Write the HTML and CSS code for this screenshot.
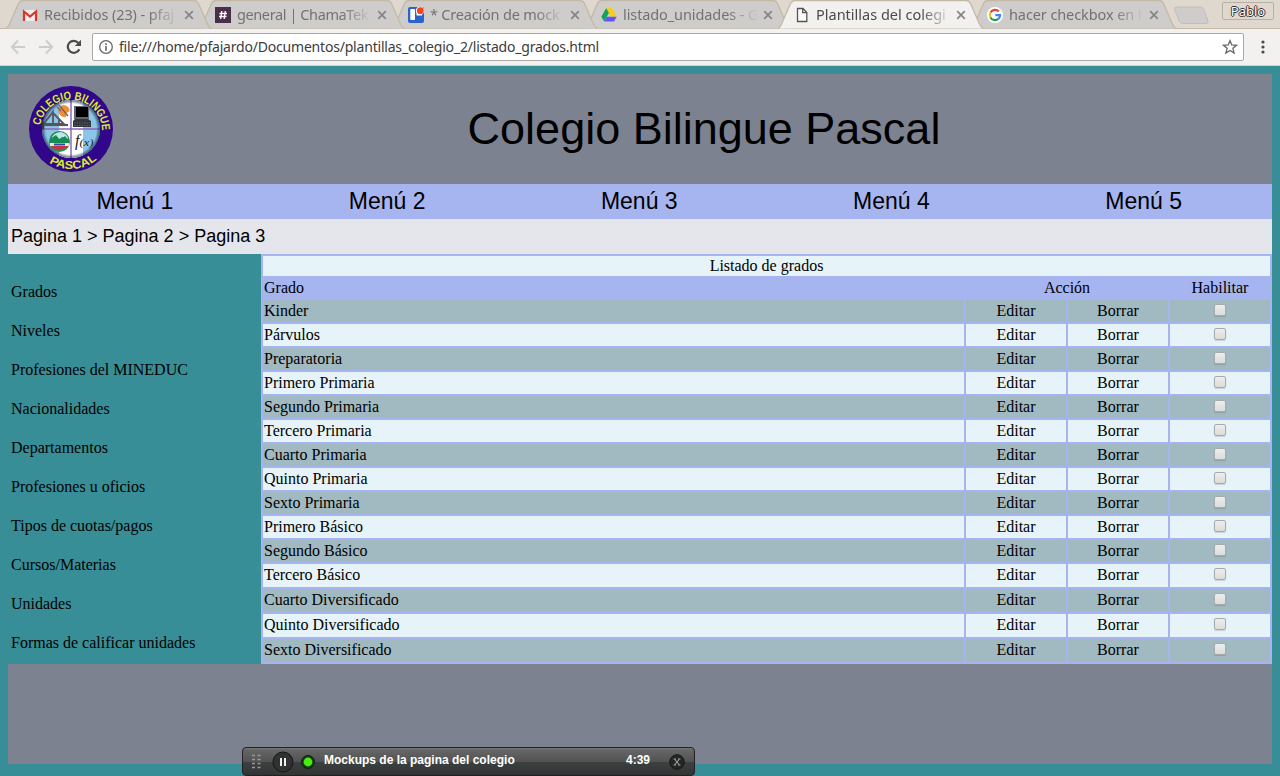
FILE: index.html
```
<!DOCTYPE html>
<html lang="es">
<head>
<meta charset="utf-8">
<title>Plantillas del colegio</title>
<link rel="stylesheet" href="styles.css">
</head>
<body>
<svg class="defs" width="0" height="0">
  <defs>
    <symbol id="tab-shape" viewBox="0 0 206 29"><path d="M0 28.5C2 28 2.500 26.500 4 23L12.500 3.500Q14 .5 17 .5H188Q191 .5 192.500 3.500L201 23C202.500 26.500 203 28 205.500 28.500" stroke="#c5b8a5" stroke-width="1.300"/></symbol>
    <symbol id="close" viewBox="0 0 10 10"><path d="M1.200 1.200L8.800 8.800M8.800 1.200L1.200 8.800" stroke="currentColor" stroke-width="1.700"/></symbol>
  </defs>
</svg>

<header class="browser">
  <div class="tabs">
    <div class="tab"><svg class="shape"><use href="#tab-shape"/></svg>
      <svg class="fav" viewBox="0 0 16 16"><path d="M1 3H15V14H1Z" fill="#eee"/><path d="M2 14V4.500L8 9.500L14 4.500V14" fill="none" stroke="#dc3527" stroke-width="2.200"/></svg>
      <span class="label l1">Recibidos (23) - pfaj</span><svg class="x"><use href="#close"/></svg></div>
    <div class="tab"><svg class="shape"><use href="#tab-shape"/></svg>
      <svg class="fav" viewBox="0 0 16 16"><path d="M0 0H16V16H0Z" fill="#4b2f4a"/><path d="M6.800 4L5.700 12M10.300 4L9.200 12M4.500 6.500H12M4 9.500H11.500" stroke="#fff" stroke-width="1.300"/></svg>
      <span class="label l2">general | ChamaTek</span><svg class="x"><use href="#close"/></svg></div>
    <div class="tab"><svg class="shape"><use href="#tab-shape"/></svg>
      <svg class="fav" viewBox="0 0 16 16"><rect width="16" height="16" rx="2" fill="#2d62c8"/><rect x="2.300" y="2" width="4.700" height="11" rx=".7" fill="#fff"/><path d="M8.500 2H14V8.500H8.500Z" fill="#fff"/><circle cx="12" cy="3.800" r="4.200" fill="#fff"/><circle cx="12.300" cy="3.700" r="3.400" fill="#f04624"/></svg>
      <span class="label l3">* Creación de mock</span><svg class="x"><use href="#close"/></svg></div>
    <div class="tab"><svg class="shape"><use href="#tab-shape"/></svg>
      <svg class="fav" viewBox="0 0 16 16"><path d="M5.300 1L8 5.800L3.200 14.500L.3 9.800Z" fill="#12a45c"/><path d="M5.300 1H10.700L15.700 9.800H10.200Z" fill="#fccf08"/><path d="M5.800 9.800H15.700L13 14.500H3.200Z" fill="#6155f5"/></svg>
      <span class="label l4">listado_unidades - G</span><svg class="x"><use href="#close"/></svg></div>
    <div class="tab active"><svg class="shape"><use href="#tab-shape"/></svg>
      <svg class="fav" viewBox="0 0 16 16"><path d="M3.500 1.500H9L12.800 5.500V14.500H3.500ZM8.700 1.500V5.700H12.800" fill="#fafafa" stroke="#555" stroke-width="1.300"/></svg>
      <span class="label l5">Plantillas del colegi</span><svg class="x"><use href="#close"/></svg></div>
    <div class="tab"><svg class="shape"><use href="#tab-shape"/></svg>
      <svg class="fav" viewBox="0 0 16 16"><circle cx="8" cy="8" r="8" fill="#fff"/><g fill="none" stroke-width="2.200"><path d="M11.800 4.500A5.100 5.100 0 0 0 3.500 5.600" stroke="#ea4335"/><path d="M3.500 5.600A5.100 5.100 0 0 0 3.500 10.400" stroke="#fbbc05"/><path d="M3.500 10.400A5.100 5.100 0 0 0 11.500 11.700" stroke="#20a34a"/><path d="M11.500 11.700A5.100 5.100 0 0 0 13 8.200H8.300" stroke="#4285f4"/></g></svg>
      <span class="label l6">hacer checkbox en l</span><svg class="x"><use href="#close"/></svg></div>
    <svg class="newtab" viewBox="0 0 36 19"><path d="M3.500 1H27Q29.500 1 30.500 3L35 15Q35.500 17.500 33 17.500H9.500Q7.500 17.500 6.500 15.500L1.500 3.500Q1 1 3.500 1Z" fill="#cfcdcc" stroke="#c8bcab"/></svg>
    <div class="user">Pablo</div>
  </div>
  <div class="toolbar">
    <svg class="arrow" viewBox="0 0 16 16"><path d="M15 8H2M8 1.500L1.800 8L8 14.500"/></svg>
    <svg class="arrow" viewBox="0 0 16 16"><path d="M1 8H14M8 1.500L14.200 8L8 14.500"/></svg>
    <svg class="reload" viewBox="0 0 16 16"><path d="M13.300 10.200A6 6 0 1 1 12.400 4" fill="none" stroke="#4a4a4a" stroke-width="2.200"/><path d="M15 .8V7H8.800Z" fill="#4a4a4a"/></svg>
    <div class="address">
      <svg class="info" viewBox="0 0 16 16"><circle cx="8" cy="8" r="6.300" fill="none" stroke="#666" stroke-width="1.300"/><path d="M8 7V11.700M8 4.300V5.900" stroke="#666" stroke-width="1.600"/></svg>
      <span class="url">file:///home/pfajardo/Documentos/plantillas_colegio_2/listado_grados.html</span>
      <svg class="star" viewBox="0 0 16 16"><path d="M8 1.700L9.800 6L14.500 6.300L10.900 9.300L12.100 14L8 11.400L3.900 14L5.100 9.300L1.500 6.300L6.200 6Z" fill="none" stroke="#666" stroke-width="1.300"/></svg>
    </div>
    <svg class="kebab" viewBox="0 0 4 14"><g fill="#4a4a4a"><circle cx="2" cy="2" r="1.600"/><circle cx="2" cy="7" r="1.600"/><circle cx="2" cy="12" r="1.600"/></g></svg>
  </div>
</header>

<main class="page">
  <div class="banner">
    <svg class="logo" viewBox="0 0 86 88">
      <defs>
        <path id="arc-top" d="M12.200 40.500A31.200 31.500 0 0 1 74 43.500"/>
        <path id="arc-bottom" d="M19.500 76.500A40 40 0 0 0 70 73.500"/>
        <clipPath id="disc"><circle cx="43" cy="44" r="29"/></clipPath>
        <radialGradient id="rim"><stop offset=".87" stop-color="#234" stop-opacity="0"/><stop offset="1" stop-color="#123" stop-opacity=".7"/></radialGradient>
      </defs>
      <ellipse cx="43" cy="44" rx="42" ry="43" fill="#32068a"/>
      <g clip-path="url(#disc)">
        <path d="M14 15H72V73H14Z" fill="#8bc6e8"/><path d="M31 15H55V73H31Z" fill="#fff"/>
        <path d="M43 15V73M14 44H72" stroke="#8b68b9" stroke-width="1.500"/>
        <circle cx="43" cy="44" r="29" fill="url(#rim)"/>
      </g>
      <path d="M30 23Q36 17 41 23Q43 27 38 28Q40 33 35 32Q30 30 30 23Z" fill="#ec9030"/>
      <path d="M31 20L40 31M29 22L33 26" stroke="#765b64" stroke-width="1.200"/>
      <g fill="none" stroke="#57545c" stroke-width="1.800"><path d="M15 40L25 27V40ZM25 28L36 39H16M31 34V39"/><path d="M15 40H40" stroke-width="2.200"/></g><path d="M15 36V44" stroke="#333844" stroke-width="2"/>
      <path d="M46 21H61V34H46Z" fill="#60666b"/><path d="M48 22H60V32H48Z" fill="#000"/><path d="M47 34H60L63 36V42H45V36Z" fill="#32373c"/><path d="M46 38H62M46 40.500H62" stroke="#777" stroke-width=".6" stroke-dasharray="1.500 1"/>
      <circle cx="31.500" cy="56.500" r="10.500" fill="#35884e"/><path d="M23 54Q26 47 33 47Q40 49 40 54L34 52L30 55Z" fill="#b8e9ef"/><path d="M22 54L28 50L32 55L37 51L41 56V59H22Z" fill="#168c54"/><path d="M22 59.500H41" stroke="#f2e7cb" stroke-width="3"/><path d="M23 61Q31 69 40 61Z" fill="#c83245"/><path d="M26 59.500H37" stroke="#304c9c" stroke-width="2"/>
      <text class="fx" x="47" y="61">f<tspan class="fx-arg" textLength="14" lengthAdjust="spacingAndGlyphs">(x)</tspan></text>
      <text class="ring"><textPath href="#arc-top" textLength="92" lengthAdjust="spacingAndGlyphs">COLEGIO BILINGUE</textPath></text>
      <text class="ring bottom"><textPath href="#arc-bottom" startOffset="2" textLength="51" lengthAdjust="spacingAndGlyphs">PASCAL</textPath></text>
    </svg>
    <h1>Colegio Bilingue Pascal</h1>
  </div>
  <nav class="menu"><span>Menú 1</span><span>Menú 2</span><span>Menú 3</span><span>Menú 4</span><span>Menú 5</span></nav>
  <div class="crumbs">Pagina 1 &gt; Pagina 2 &gt; Pagina 3</div>
  <div class="content">
    <aside class="side"><a>Grados</a><a>Niveles</a><a>Profesiones del MINEDUC</a><a>Nacionalidades</a><a>Departamentos</a><a>Profesiones u oficios</a><a>Tipos de cuotas/pagos</a><a>Cursos/Materias</a><a>Unidades</a><a>Formas de calificar unidades</a></aside>
    <section class="list">
      <div class="caption">Listado de grados</div>
      <div class="row head"><span>Grado</span><span class="action">Acción</span><span>Habilitar</span></div>
      <div class="row"><span>Kinder</span><span>Editar</span><span>Borrar</span><span><i class="box"></i></span></div>
      <div class="row"><span>Párvulos</span><span>Editar</span><span>Borrar</span><span><i class="box"></i></span></div>
      <div class="row"><span>Preparatoria</span><span>Editar</span><span>Borrar</span><span><i class="box"></i></span></div>
      <div class="row"><span>Primero Primaria</span><span>Editar</span><span>Borrar</span><span><i class="box"></i></span></div>
      <div class="row"><span>Segundo Primaria</span><span>Editar</span><span>Borrar</span><span><i class="box"></i></span></div>
      <div class="row"><span>Tercero Primaria</span><span>Editar</span><span>Borrar</span><span><i class="box"></i></span></div>
      <div class="row"><span>Cuarto Primaria</span><span>Editar</span><span>Borrar</span><span><i class="box"></i></span></div>
      <div class="row"><span>Quinto Primaria</span><span>Editar</span><span>Borrar</span><span><i class="box"></i></span></div>
      <div class="row"><span>Sexto Primaria</span><span>Editar</span><span>Borrar</span><span><i class="box"></i></span></div>
      <div class="row"><span>Primero Básico</span><span>Editar</span><span>Borrar</span><span><i class="box"></i></span></div>
      <div class="row"><span>Segundo Básico</span><span>Editar</span><span>Borrar</span><span><i class="box"></i></span></div>
      <div class="row tall"><span>Tercero Básico</span><span>Editar</span><span>Borrar</span><span><i class="box"></i></span></div>
      <div class="row tall"><span>Cuarto Diversificado</span><span>Editar</span><span>Borrar</span><span><i class="box"></i></span></div>
      <div class="row tall"><span>Quinto Diversificado</span><span>Editar</span><span>Borrar</span><span><i class="box"></i></span></div>
      <div class="row tall"><span>Sexto Diversificado</span><span>Editar</span><span>Borrar</span><span><i class="box"></i></span></div>
    </section>
  </div>
  <footer class="foot"></footer>
</main>

<div class="tracker">
  <svg class="grip" viewBox="0 0 10 15"><path d="M0 1.500H9M0 5.500H9M0 9.500H9M0 13.500H9" stroke="#999" stroke-width="1.500" stroke-dasharray="3 2.500"/></svg>
  <svg class="pause" viewBox="0 0 22 22"><circle cx="11" cy="11" r="10" fill="#303232" stroke="#151515"/><path d="M9 7V15M13 7V15" stroke="#eee" stroke-width="2"/></svg>
  <svg class="led" viewBox="0 0 16 16"><circle cx="8" cy="8" r="6.500" fill="#173b12" stroke="#171d17"/><circle cx="8" cy="8" r="4.400" fill="#42f00b"/></svg>
  <b class="task">Mockups de la pagina del colegio</b>
  <b>4:39</b>
  <svg class="stop" viewBox="0 0 16 16"><circle cx="8" cy="8" r="7.300" fill="#242626" stroke="#191919"/><path d="M5.500 5L10.500 11M10.500 5L5.500 11M4.500 5H7M9 5H11.500M4.500 11H7M9 11H11.500" stroke="#999" stroke-width="1.100"/></svg>
</div>
</body>
</html>
```
FILE: styles.css
```
* { box-sizing: border-box; }
body { margin: 0; height: 776px; overflow: hidden; position: relative; background: #388e96; color: #000; font: 16px "Liberation Serif", serif; }
svg { display: block; flex: none; }
.defs { position: absolute; }
.browser { height: 66px; background: #f2f1f0; border-bottom: 1px solid #cfd0d0; font-family: "Noto Sans", sans-serif; }
.tabs { height: 29px; display: flex; padding-left: 6px; background: #dfd8ce; border-bottom: 1px solid #c5b8a5; }
.tab { position: relative; isolation: isolate; width: 205px; height: 29px; margin-right: -12px; flex: none; display: flex; align-items: center; padding: 1px 16px 0; color: #727272; }
.tab:nth-child(1) { z-index: 5; }
.tab:nth-child(2) { z-index: 4; }
.tab:nth-child(3) { z-index: 3; }
.tab:nth-child(4) { z-index: 2; }
.tab.active { z-index: 6; color: #4b4b4b; }
.shape { position: absolute; z-index: -1; left: 0; top: 0; width: 206px; height: 29px; fill: #cfcdcc; }
.active .shape { fill: #f2f1f0; }
.fav { width: 16px; height: 16px; margin-right: 6px; }
.label { width: 134px; margin-top: -2px; white-space: nowrap; font-size: 14.5px; line-height: 22px; mask-image: linear-gradient(90deg, #000 78%, transparent 101%); }
.l1 { letter-spacing: -.1px; }
.l2 { letter-spacing: -.4px; }
.l3 { letter-spacing: -.2px; }
.l4 { letter-spacing: -.1px; }
.l5 { letter-spacing: 0; }
.l6 { letter-spacing: -.1px; }
.x { width: 10px; height: 10px; margin-left: 6px; color: #858585; }
.newtab { width: 36px; height: 19px; margin: 6px 0 0 9px; }
.user { margin: 2px 6px 0 auto; width: 52px; height: 18px; border: 1px solid #b9b0a5; border-radius: 2px; font-size: 13px; line-height: 17px; text-align: center; color: #fff; text-shadow: 1px 0 #333, -1px 0 #333, 0 1px #333, 0 -1px #333; }
.toolbar { height: 36px; display: flex; align-items: center; padding: 0 15px 0 10px; }
.arrow { width: 16px; height: 16px; margin-right: 12px; fill: none; stroke: #cfcdcc; stroke-width: 2; }
.reload { width: 16px; height: 16px; }
.address { width: 1152px; height: 28px; margin-left: 10px; display: flex; align-items: center; background: #fff; border: 1px solid #aaa9a8; border-radius: 2px; padding: 0 5px; }
.info { width: 16px; height: 16px; margin-right: 5px; }
.url { flex: 1; margin-top: -2px; font-size: 14px; letter-spacing: -.2px; color: #3c3c3c; white-space: nowrap; }
.star { width: 16px; height: 16px; }
.kebab { width: 4px; height: 14px; margin-left: auto; }
.page { padding: 8px 8px 0; }
.banner { height: 110px; background: #7d8291; display: flex; align-items: center; padding-left: 20px; }
.logo { width: 86px; height: 88px; }
.ring { font: bold 11.5px "Liberation Sans", sans-serif; fill: #d8f02a; }
.bottom { font-size: 11.5px; }
.fx { font: italic 16px "Liberation Serif", serif; fill: #222; }
.fx-arg { font-size: 11px; }
h1 { flex: 1; margin: 0 0 0 22px; font: 45px "Liberation Sans", sans-serif; text-align: center; }
.menu { height: 35px; display: grid; grid-template-columns: repeat(5, 252.2px); padding-left: .8px; background: #a6b4ef; font: 23px/35px "Liberation Sans", sans-serif; text-align: center; }
.crumbs { height: 35px; padding-left: 3px; background: #e5e6eb; font: 18px/34px "Liberation Sans", sans-serif; }
.content { height: 410px; display: flex; }
.side { width: 253px; padding: 18px 0 0 3px; display: flex; flex-direction: column; }
.side a { height: 39px; line-height: 39px; }
.list { flex: 1; padding: 2px; background: #a6b4ef; display: flex; flex-direction: column; gap: 2px; }
.caption { height: 20px; line-height: 20px; text-align: center; background: #e6f3f8; }
.row { height: 22px; line-height: 22px; display: grid; grid-template-columns: 701px 100px 100px 100px; gap: 2px; text-align: center; }
.row span { background: #e6f3f8; }
.row:nth-child(odd) span { background: #a1b9c0; }
.row span:first-child { text-align: left; padding-left: 1px; }
.row.head { height: 20px; line-height: 20px; }
.row.head span { background: none; }
.row .action { grid-column: span 2; }
.row.tall { height: 23px; }
.box { display: block; width: 12px; height: 12px; margin: 4px auto 0; border: 1px solid #aaa; border-radius: 2px; background: linear-gradient(#ededed, #dcdcdc); box-shadow: 0 1px 1px #0002; }
.foot { height: 100px; background: #7d8291; }
.tracker { position: absolute; left: 242px; top: 747px; width: 453px; height: 29px; display: flex; align-items: center; padding: 0 9px; border: 1px solid #222; border-radius: 4px; background: linear-gradient(#777, #656565 8%, #535353 50%, #3c4040 51%, #303535); color: #fff; font: 12px "Liberation Sans", sans-serif; }
.grip { width: 10px; height: 15px; }
.pause { width: 22px; height: 22px; margin-left: 10px; }
.led { width: 16px; height: 16px; margin: 0 8px 0 6px; }
.task { width: 302px; }
.tracker b { margin-top: -3px; }
.stop { width: 16px; height: 16px; margin-left: auto; }
```
